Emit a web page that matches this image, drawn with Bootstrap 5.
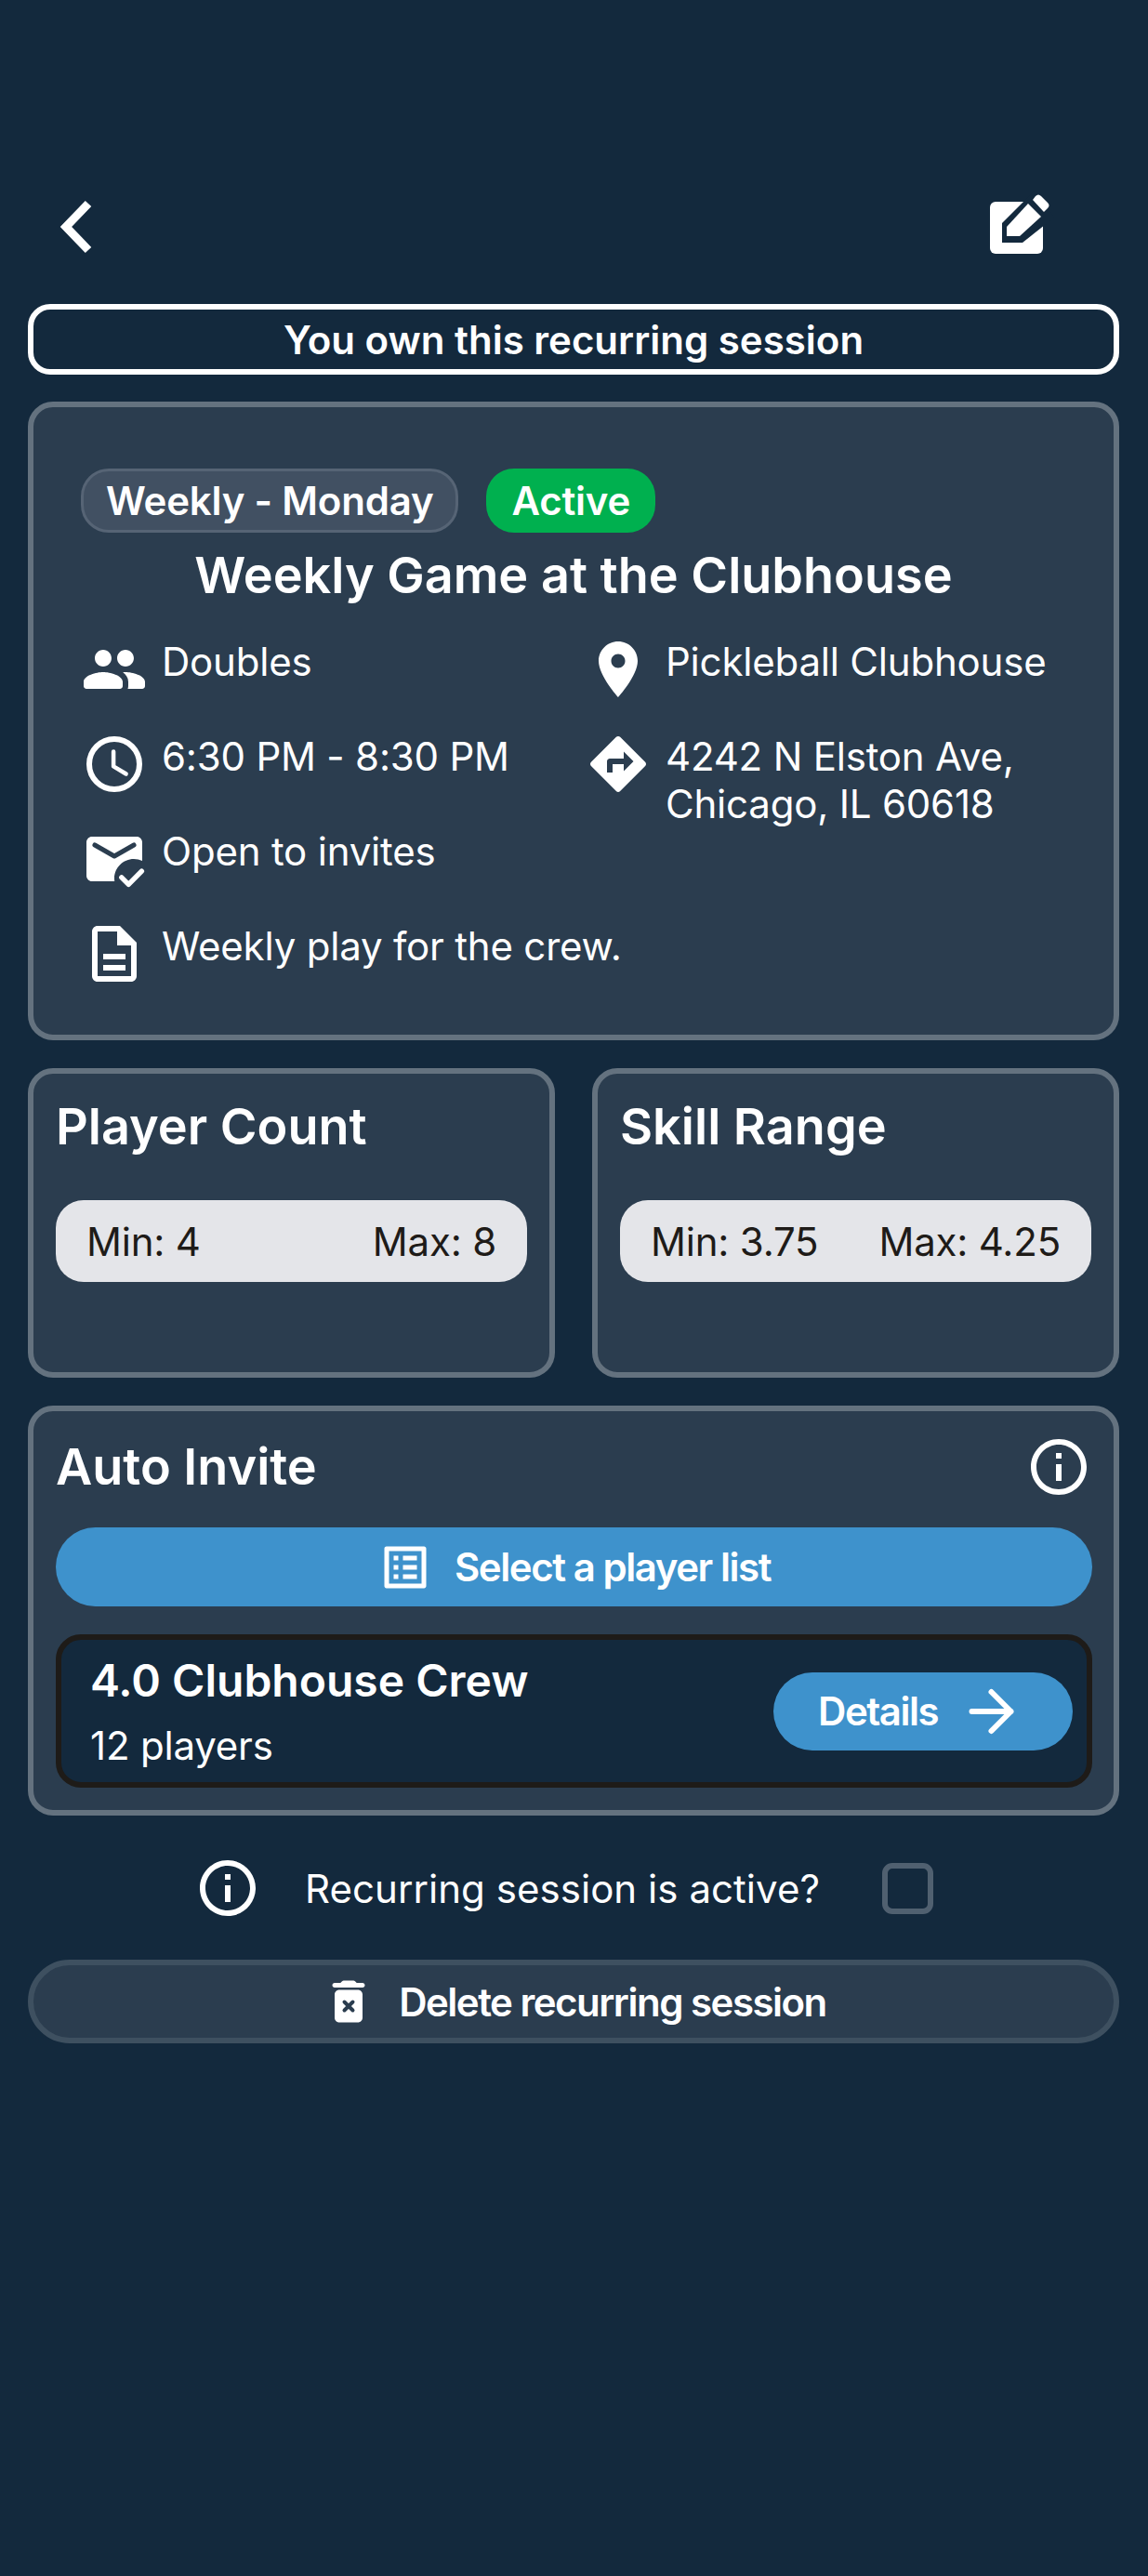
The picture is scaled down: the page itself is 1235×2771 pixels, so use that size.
<!DOCTYPE html>
<html lang="en">
<head>
  <meta charset="UTF-8" />
  <meta name="viewport" content="width=device-width, initial-scale=1.0"/>
  <title>Recurring session</title>
  <link href="https://cdn.jsdelivr.net/npm/bootstrap@5.3.2/dist/css/bootstrap.min.css" rel="stylesheet" />
  <style>
    body {
      background-color: #13293d;
      color: #fff;
      font-family: Inter, "Liberation Sans", sans-serif;
      font-size: 42px;
      line-height: 51px;
      letter-spacing: -0.2px;
      min-height: 2771px;
    }
    svg { display: block; flex: none; fill: #fff; }
    .page-wrap { padding: 204px 31px 0 30px; }
    .top-bar { height: 78px; padding: 0 66px 0 33px; margin-bottom: 45px; }
    .owner-banner {
      height: 76px;
      border: 6px solid #fff;
      border-radius: 24px;
      font-weight: 600;
      letter-spacing: 0;
      margin-bottom: 29px;
    }
    .panel {
      background: #2b3d4f;
      border: 6px solid #64727f;
      border-radius: 27px;
    }
    .panel-main { padding: 66px 30px 51px 51px; margin-bottom: 30px; }
    .tag-row { gap: 30px; }
    .tag-pill {
      height: 69px;
      padding: 0 27px;
      border-radius: 30px;
      font-weight: 600;
      display: flex;
      align-items: center;
    }
    .tag-grey { background: #415062; border: 3px solid #566475; padding: 0 24px; }
    .tag-green { background: #00b04f; }
    .session-title { font-size: 54px; line-height: 66px; font-weight: 600; letter-spacing: 0; margin: 13px 0 32px; text-align: center; padding-right: 21px; }
    .info-col { width: 542px; }
    .info-row { display: flex; gap: 15px; margin-bottom: 30px; }
    .info-row span { display: block; margin-top: 2px; white-space: nowrap; }
    .stat-row { --bs-gutter-x: 40px; margin-bottom: 30px; }
    .panel-stat { height: 333px; padding: 24px 24px; }
    .panel-heading { font-size: 54px; line-height: 66px; font-weight: 600; letter-spacing: 0; margin: 0; }
    .range-pill {
      background: #e4e5e9;
      color: #1e1b18;
      height: 88px;
      margin-top: 46px;
      padding: 0 33px;
      border-radius: 30px;
    }
    .panel-invite { height: 441px; padding: 18px 23px 24px 24px; margin-bottom: 51px; }
    .invite-head { height: 84px; margin-bottom: 23px; }
    .blue-btn {
      background: #3e92cc;
      color: #fff;
      border: 0;
      border-radius: 43px;
      font-weight: 600;
      font-size: 42px;
      letter-spacing: -1.45px;
    }
    .select-btn { width: 100%; height: 85px; gap: 23px; margin-bottom: 30px; }
    .list-box {
      height: 165px;
      background: #13293d;
      border: 6px solid #1e1b18;
      border-radius: 27px;
      padding: 0 15px 0 31px;
    }
    .list-name { font-size: 48px; line-height: 60px; font-weight: 600; letter-spacing: 0; }
    .list-count { margin-top: 14px; }
    .details-btn { width: 322px; height: 84px; padding: 0 0 0 48px; gap: 23px; }
    .active-row { height: 54px; padding-left: 179px; margin-bottom: 50px; }
    .active-row span { margin: 0 67px 0 47px; letter-spacing: 0.05px; }
    .fake-check { width: 55px; height: 55px; border: 6px solid #506070; border-radius: 11px; }
    .delete-btn {
      height: 90px;
      background: #2b3d4f;
      border: 6px solid #3e5060;
      border-radius: 45px;
      color: #fff;
      font-weight: 600;
      letter-spacing: -1.5px;
      gap: 24px;
      width: 100%;
    }
  </style>
</head>
<body>
  <div class="page-wrap">

    <!-- Top bar -->
    <div class="top-bar d-flex justify-content-between align-items-center">
      <svg width="48" height="72" viewBox="0 0 48 72"><path d="M32 12 8 37l24 25" fill="none" stroke="#fff" stroke-width="9"/></svg>
      <svg width="78" height="78" viewBox="1060 203 78 78">
        <rect x="1065" y="216" width="57" height="56" rx="6"/>
        <path d="M1078 260v-21l36-36 20 30-34 27z" fill="#13293d"/>
        <path d="M1083 253v-10l23-25 14 14-23 21z"/>
        <path d="M1111 214l3-4c2-2 4-2 6 0l7 7c2 2 2 4 0 6l-4 4z"/>
      </svg>
    </div>

    <div class="owner-banner d-flex align-items-center justify-content-center">You own this recurring session</div>

    <!-- Session card -->
    <div class="panel panel-main">
      <div class="tag-row d-flex">
        <div class="tag-pill tag-grey">Weekly - Monday</div>
        <div class="tag-pill tag-green">Active</div>
      </div>
      <div class="session-title">Weekly Game at the Clubhouse</div>
      <div class="d-flex">
        <div class="info-col">
          <div class="info-row">
            <svg width="72" height="72" viewBox="0 0 24 24"><path d="M16 11c1.66 0 2.99-1.34 2.99-3S17.66 5 16 5s-3 1.34-3 3 1.34 3 3 3zm-8 0c1.66 0 2.99-1.34 2.99-3S9.66 5 8 5 5 6.34 5 8s1.34 3 3 3zm0 2c-2.33 0-7 1.17-7 3.5V18c0 .55.45 1 1 1h12c.55 0 1-.45 1-1v-1.5c0-2.33-4.67-3.5-7-3.5zm8 0c-.29 0-.62.02-.97.05.02.01.03.03.04.04 1.14.83 1.93 1.94 1.93 3.41V18c0 .35-.07.69-.18 1H22c.55 0 1-.45 1-1v-1.5c0-2.33-4.67-3.5-7-3.5z"/></svg>
            <span>Doubles</span>
          </div>
          <div class="info-row">
            <svg width="72" height="72" viewBox="0 0 24 24"><circle cx="12" cy="12" r="9" fill="none" stroke="#fff" stroke-width="2"/><path d="M11.700 7.500v5.300l4.500 2.700" fill="none" stroke="#fff" stroke-width="1.500" stroke-linecap="round" stroke-linejoin="round"/></svg>
            <span>6:30 PM - 8:30 PM</span>
          </div>
          <div class="info-row">
            <svg width="72" height="72" viewBox="0 0 24 24"><path d="M12 19c0-3.870 3.130-7 7-7 1.080 0 2.090.25 3 .68V6c0-1.100-.9-2-2-2H4c-1.100 0-2 .9-2 2v12c0 1.100.9 2 2 2h8.080c-.05-.33-.08-.66-.08-1z"/><path d="m5 7 7 4 7-4" fill="none" stroke="#2b3d4f" stroke-width="1.700" stroke-linecap="round" stroke-linejoin="round"/><path d="m14.600 18.600 2.500 2.500 4.700-4.700" fill="none" stroke="#fff" stroke-width="1.800" stroke-linecap="round" stroke-linejoin="round"/></svg>
            <span>Open to invites</span>
          </div>
          <div class="info-row mb-0">
            <svg width="72" height="72" viewBox="0 0 24 24"><path d="M8 16h8v2H8zm0-4h8v2H8zm6-10H6c-1.100 0-2 .9-2 2v16c0 1.100.89 2 1.990 2H18c1.100 0 2-.9 2-2V8l-6-6zm4 18H6V4h7v5h5v11z"/></svg>
            <span>Weekly play for the crew.</span>
          </div>
        </div>
        <div>
          <div class="info-row">
            <svg width="72" height="72" viewBox="0 0 24 24"><path d="M12 2C8.130 2 5 5.130 5 9c0 5.250 7 13 7 13s7-7.750 7-13c0-3.870-3.130-7-7-7zm0 9.500c-1.380 0-2.500-1.120-2.500-2.500s1.120-2.500 2.500-2.500 2.500 1.120 2.500 2.500-1.120 2.500-2.500 2.500z"/></svg>
            <span>Pickleball Clubhouse</span>
          </div>
          <div class="info-row">
            <svg width="72" height="72" viewBox="0 0 24 24"><path d="M21.710 11.290l-9-9c-.39-.39-1.020-.39-1.410 0l-9 9c-.39.39-.39 1.020 0 1.410l9 9c.39.39 1.020.39 1.410 0l9-9c.39-.38.39-1.010 0-1.410zM14 14.500V12h-4v3H8v-4c0-.55.45-1 1-1h5V7.500l3.500 3.500-3.500 3.500z"/></svg>
            <span>4242 N Elston Ave,<br>Chicago, IL 60618</span>
          </div>
        </div>
      </div>
    </div>

    <!-- Player count / skill range -->
    <div class="row stat-row">
      <div class="col-6">
        <div class="panel panel-stat">
          <h2 class="panel-heading">Player Count</h2>
          <div class="range-pill d-flex justify-content-between align-items-center"><span>Min: 4</span><span>Max: 8</span></div>
        </div>
      </div>
      <div class="col-6">
        <div class="panel panel-stat">
          <h2 class="panel-heading">Skill Range</h2>
          <div class="range-pill d-flex justify-content-between align-items-center"><span>Min: 3.75</span><span>Max: 4.25</span></div>
        </div>
      </div>
    </div>

    <!-- Auto invite -->
    <div class="panel panel-invite">
      <div class="invite-head d-flex justify-content-between align-items-center">
        <h2 class="panel-heading">Auto Invite</h2>
        <svg width="72" height="72" viewBox="0 0 24 24"><path d="M11 7h2v2h-2zm0 4h2v6h-2zm1-9C6.480 2 2 6.480 2 12s4.480 10 10 10 10-4.480 10-10S17.520 2 12 2zm0 18c-4.410 0-8-3.590-8-8s3.590-8 8-8 8 3.590 8 8-3.590 8-8 8z"/></svg>
      </div>
      <button class="blue-btn select-btn d-flex align-items-center justify-content-center">
        <svg width="60" height="60" viewBox="0 0 24 24"><path d="M19 5v14H5V5h14m1.100-2H3.900c-.5 0-.9.4-.9.9v16.200c0 .4.4.9.9.9h16.200c.4 0 .9-.5.9-.9V3.900c0-.5-.5-.9-.9-.9zM11 7h6v2h-6V7zm0 4h6v2h-6v-2zm0 4h6v2h-6zM7 7h2v2H7zm0 4h2v2H7zm0 4h2v2H7z"/></svg>
        Select a player list
      </button>
      <div class="list-box d-flex justify-content-between align-items-center">
        <div>
          <div class="list-name">4.0 Clubhouse Crew</div>
          <div class="list-count">12 players</div>
        </div>
        <button class="blue-btn details-btn d-flex align-items-center">
          Details
          <svg width="72" height="72" viewBox="0 0 24 24"><path d="M4.500 12h14M11.500 5l7 7-7 7" fill="none" stroke="#fff" stroke-width="2" stroke-linecap="round" stroke-linejoin="round"/></svg>
        </button>
      </div>
    </div>

    <!-- Active toggle -->
    <div class="active-row d-flex align-items-center">
      <svg width="72" height="72" viewBox="0 0 24 24"><path d="M11 7h2v2h-2zm0 4h2v6h-2zm1-9C6.480 2 2 6.480 2 12s4.480 10 10 10 10-4.480 10-10S17.520 2 12 2zm0 18c-4.410 0-8-3.590-8-8s3.590-8 8-8 8 3.590 8 8-3.590 8-8 8z"/></svg>
      <span>Recurring session is active?</span>
      <div class="fake-check"></div>
    </div>

    <button class="delete-btn d-flex align-items-center justify-content-center">
      <svg width="60" height="60" viewBox="0 0 24 24"><path d="M6 19c0 1.100.9 2 2 2h8c1.100 0 2-.9 2-2V9c0-1.100-.9-2-2-2H8c-1.100 0-2 .9-2 2v10zM18 4h-2.500l-.71-.71c-.18-.18-.44-.29-.7-.29H9.910c-.26 0-.52.11-.7.29L8.500 4H6c-.55 0-1 .45-1 1s.45 1 1 1h12c.55 0 1-.45 1-1s-.45-1-1-1z"/><path d="m10.200 12.200 3.600 3.600m0-3.600-3.600 3.600" stroke="#2b3d4f" stroke-width="1.600" stroke-linecap="round"/></svg>
      Delete recurring session
    </button>

  </div>
  <script src="https://cdn.jsdelivr.net/npm/bootstrap@5.3.2/dist/js/bootstrap.bundle.min.js"></script>
</body>
</html>
